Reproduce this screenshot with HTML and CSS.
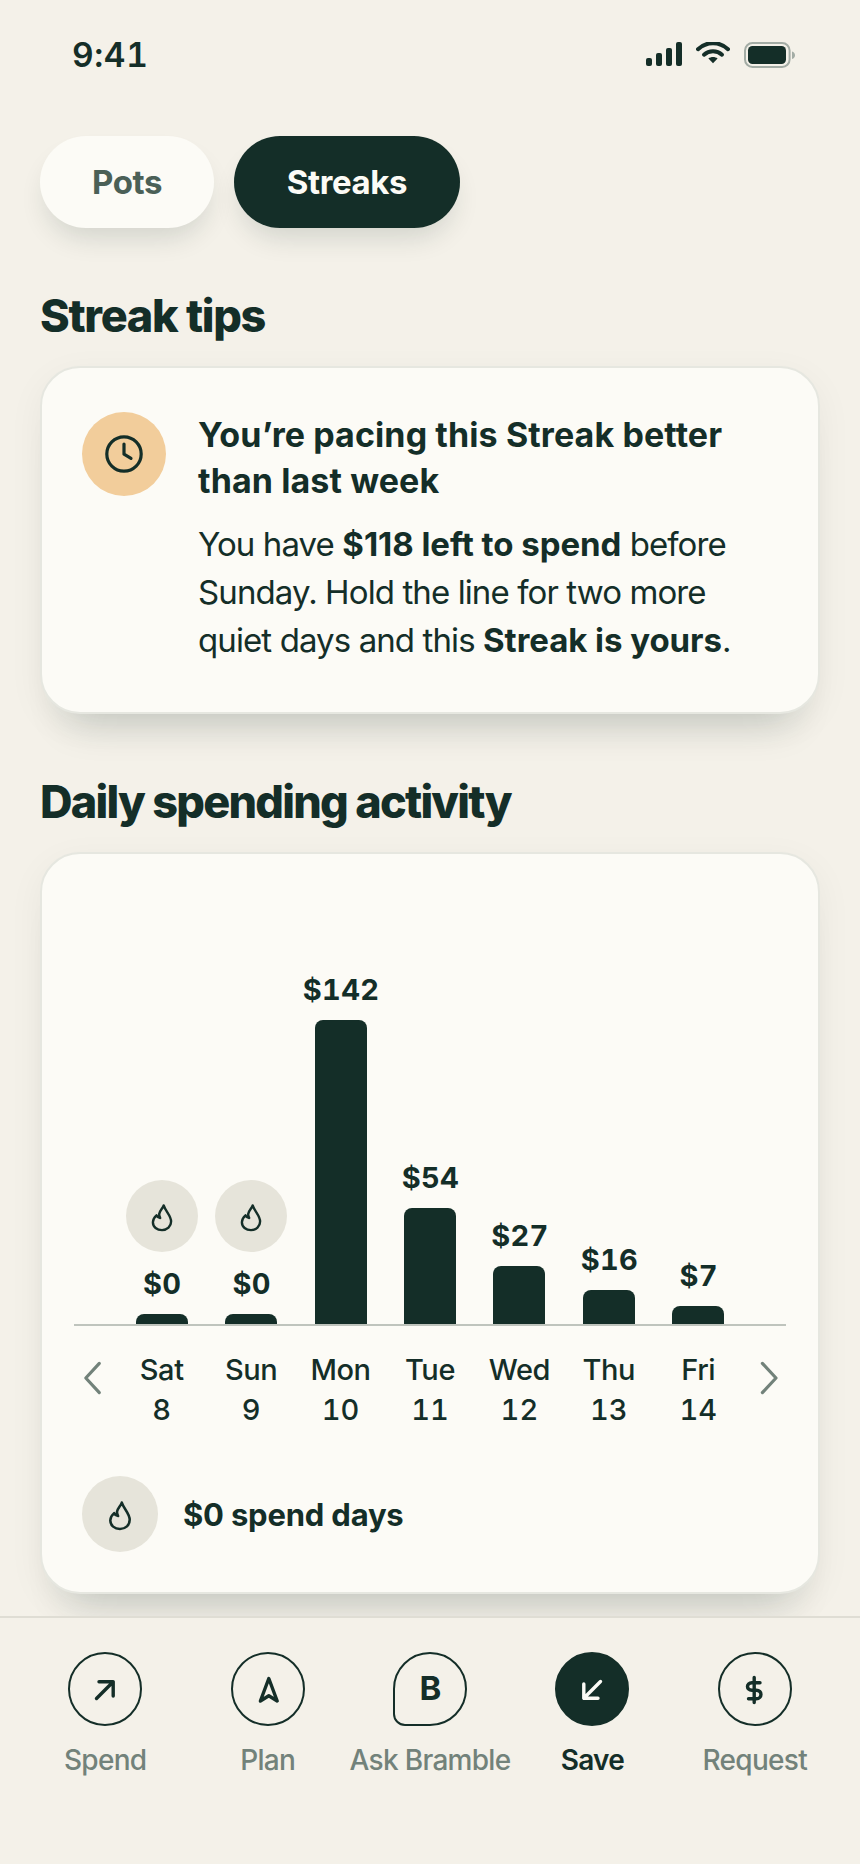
FILE: index.html
```html
<!DOCTYPE html>
<html lang="en">
<head>
  <meta charset="UTF-8">
  <meta name="viewport" content="width=device-width, initial-scale=1.0">
  <title>Bramble - Streaks</title>
  <link rel="stylesheet" href="styles.css">
</head>
<body>
  <!-- shared flame icon -->
  <svg class="defs" width="0" height="0">
    <symbol id="flame" viewBox="0 0 24 30">
      <path d="M13.7 2.4C12.6 5.8 9.6 7.6 9.2 11C9.1 12.6 9.5 13.6 10.2 15C8.6 14.8 7.2 13.8 6.5 12.3C4.3 14.2 2.9 16.6 2.9 19.3C2.9 24 7 27.1 12 27.1C17.2 27.1 21.1 23.6 21.1 18.6C21.1 12.4 15.6 8.6 13.7 2.4Z"/>
    </symbol>
  </svg>

  <div class="status-bar">
    <span class="time">9:41</span>
    <div class="status-icons">
      <svg class="signal" width="36" height="24" viewBox="0 0 36 24">
        <rect x="0" y="16" width="6" height="8" rx="2"/>
        <rect x="10" y="11" width="6" height="13" rx="2"/>
        <rect x="20" y="6" width="6" height="18" rx="2"/>
        <rect x="30" y="0" width="6" height="24" rx="2"/>
      </svg>
      <svg class="wifi" width="34" height="24" viewBox="0 0 34 24">
        <path d="M2 7.2C10.5 -0.9 23.5 -0.9 32 7.2"/>
        <path d="M8 12.7C13 8 21 8 26 12.7"/>
        <path class="dot" d="M12.4 16.4C15 14.4 19 14.4 21.6 16.4L17 21.2Z"/>
      </svg>
      <svg class="battery" width="52" height="26" viewBox="0 0 52 26">
        <rect class="shell" x="1" y="1" width="44.6" height="24" rx="7.5"/>
        <rect x="4" y="4" width="38" height="18" rx="4.5"/>
        <path class="nub" d="M48 9.5C50 10 51 11.5 51 13.2C51 15 50 16.4 48 17Z"/>
      </svg>
    </div>
  </div>

  <main class="content">
    <div class="tabs">
      <button class="tab">Pots</button>
      <button class="tab active">Streaks</button>
    </div>

    <h2 class="section-title">Streak tips</h2>
    <section class="card tip-card">
      <div class="tip-icon">
        <svg width="40" height="40" viewBox="0 0 40 40">
          <circle cx="20" cy="20" r="17.2"/>
          <path d="M20 10V20.2L27 24.4"/>
        </svg>
      </div>
      <div class="tip-text">
        <h3>You’re pacing this Streak better<br>than last week</h3>
        <p>You have <b>$118 left to spend</b> before<br>Sunday. Hold the line for two more<br>quiet days and this <b>Streak is yours</b>.</p>
      </div>
    </section>

    <h2 class="section-title second">Daily spending activity</h2>
    <section class="card chart-card">
      <div class="chart">
        <div class="col">
          <div class="flame"><svg width="24" height="30"><use href="#flame"/></svg></div>
          <span class="amount">$0</span>
          <div class="bar" style="height: 10px"></div>
        </div>
        <div class="col">
          <div class="flame"><svg width="24" height="30"><use href="#flame"/></svg></div>
          <span class="amount">$0</span>
          <div class="bar" style="height: 10px"></div>
        </div>
        <div class="col">
          <span class="amount">$142</span>
          <div class="bar" style="height: 304px"></div>
        </div>
        <div class="col">
          <span class="amount">$54</span>
          <div class="bar" style="height: 116px"></div>
        </div>
        <div class="col">
          <span class="amount">$27</span>
          <div class="bar" style="height: 58px"></div>
        </div>
        <div class="col">
          <span class="amount">$16</span>
          <div class="bar" style="height: 34px"></div>
        </div>
        <div class="col">
          <span class="amount">$7</span>
          <div class="bar" style="height: 18px"></div>
        </div>
      </div>

      <div class="days">
        <svg class="arrow" width="20" height="36" viewBox="0 0 20 36"><path d="M19.3 3.4L5.8 18L19.3 32.6"/></svg>
        <div class="day-list">
          <div class="day">Sat<span>8</span></div>
          <div class="day">Sun<span>9</span></div>
          <div class="day">Mon<span>10</span></div>
          <div class="day">Tue<span>11</span></div>
          <div class="day">Wed<span>12</span></div>
          <div class="day">Thu<span>13</span></div>
          <div class="day">Fri<span>14</span></div>
        </div>
        <svg class="arrow" width="20" height="36" viewBox="0 0 20 36"><path d="M2.4 3.4L16 18L2.4 32.6"/></svg>
      </div>

      <div class="legend">
        <div class="flame big"><svg width="26" height="32"><use href="#flame"/></svg></div>
        <span>$0 spend days</span>
      </div>
    </section>
  </main>

  <nav class="bottom-nav">
    <a class="nav-item">
      <span class="nav-icon"><svg width="32" height="32" viewBox="0 0 32 32"><path d="M7.5 25.5L24.2 8.8M10 8.8H24.2V23"/></svg></span>
      Spend
    </a>
    <a class="nav-item">
      <span class="nav-icon"><svg width="32" height="32" viewBox="0 0 32 32"><path d="M16.8 5.5L25.2 28L16.8 22.8L8.4 28Z"/></svg></span>
      Plan
    </a>
    <a class="nav-item">
      <span class="nav-icon bubble">B</span>
      Ask Bramble
    </a>
    <a class="nav-item active">
      <span class="nav-icon"><svg width="32" height="32" viewBox="0 0 32 32"><path d="M24.5 8.5L7.8 25.2M7.8 11V25.2H22"/></svg></span>
      Save
    </a>
    <a class="nav-item">
      <span class="nav-icon"><svg width="32" height="32" viewBox="0 0 32 32"><path d="M15.2 4.5V29.5M21 9.8H12.9C7 9.8 7 17.2 12.9 17.2H17.3C23.5 17.2 23.5 25.7 17.3 25.7H9.5"/></svg></span>
      Request
    </a>
  </nav>
</body>
</html>
```

FILE: styles.css
```css
* {
  box-sizing: border-box;
}
body {
  margin: 0;
  width: 860px;
  height: 1864px;
  overflow: hidden;
  display: flex;
  flex-direction: column;
  background: #f4f1e9;
  color: #142e28;
  font-family: Inter, "Liberation Sans", sans-serif;
}
h2, h3, p {
  margin: 0;
}
svg {
  display: block;
  fill: none;
  stroke: #142e28;
  stroke-linecap: round;
  stroke-linejoin: round;
}
.defs {
  position: absolute;
}

/* status bar */
.status-bar {
  height: 108px;
  flex: none;
  display: flex;
  justify-content: space-between;
  padding: 0 64px 0 72px;
}
.time {
  font-size: 33.5px;
  font-weight: 600;
  line-height: 40px;
  margin-top: 35px;
  letter-spacing: 0.6px;
  font-variant-numeric: tabular-nums;
}
.status-icons {
  display: flex;
  margin-top: 42px;
  gap: 14px;
}
.signal {
  fill: #142e28;
  stroke: none;
}
.wifi {
  stroke-width: 4;
}
.wifi .dot {
  fill: #142e28;
  stroke: none;
}
.battery {
  fill: #142e28;
  stroke: none;
}
.battery .shell {
  fill: none;
  stroke: #a3aca5;
  stroke-width: 2;
}
.battery .nub {
  fill: #a3aca5;
}

/* tabs */
.content {
  flex: none;
  height: 1508px;
  overflow: hidden;
  padding: 28px 40px 0;
}
.tabs {
  display: flex;
  gap: 20px;
}
.tab {
  width: 174px;
  height: 92px;
  padding: 0;
  border: none;
  border-radius: 46px;
  background: #fcfbf6;
  color: #4b6057;
  font-family: inherit;
  font-size: 33px;
  font-weight: 700;
  letter-spacing: -0.4px;
  box-shadow: 0 16px 28px -8px rgba(20, 46, 40, 0.16);
}
.tab.active {
  width: 226px;
  background: #142e28;
  color: #fcfbf6;
}

.section-title {
  margin-top: 62px;
  font-size: 45px;
  font-weight: 800;
  line-height: 52px;
  letter-spacing: -1.3px;
}
.section-title.second {
  letter-spacing: -1.75px;
}
.card {
  margin-top: 24px;
  background: #fcfbf6;
  border: 2px solid #e6e7e0;
  border-radius: 40px;
  box-shadow: 0 36px 40px -28px rgba(20, 46, 40, 0.2), 0 10px 36px rgba(20, 46, 40, 0.05);
}

/* tip */
.tip-card {
  height: 348px;
  display: flex;
  gap: 32px;
  padding: 44px 40px 0;
}
.tip-icon {
  width: 84px;
  height: 84px;
  flex: none;
  border-radius: 50%;
  background: #f2cd9b;
  display: flex;
  align-items: center;
  justify-content: center;
}
.tip-icon svg {
  stroke-width: 3.2;
}
.tip-text {
  white-space: nowrap;
}
.tip-text h3 {
  font-size: 34px;
  font-weight: 700;
  line-height: 46px;
  letter-spacing: 0.1px;
}
.tip-text p {
  margin-top: 16px;
  font-size: 33px;
  line-height: 48px;
  letter-spacing: -0.9px;
}
.tip-text b {
  font-weight: 700;
  letter-spacing: -0.05px;
}

/* chart */
.chart-card {
  height: 742px;
  padding: 0 32px;
}
.chart {
  height: 472px;
  padding: 0 43px;
  display: flex;
  align-items: flex-end;
  border-bottom: 2px solid #bfc4bd;
}
.col {
  flex: 1;
  display: flex;
  flex-direction: column;
  align-items: center;
}
.bar {
  width: 52px;
  background: #142e28;
  border-radius: 8px 8px 0 0;
}
.amount {
  font-size: 29px;
  font-weight: 700;
  line-height: 36px;
  margin-bottom: 12px;
  padding-left: 1px;
  letter-spacing: 0.3px;
  font-variant-numeric: tabular-nums;
}
.flame {
  width: 72px;
  height: 72px;
  margin-bottom: 14px;
  border-radius: 50%;
  background: #e6e4da;
  display: flex;
  align-items: center;
  justify-content: center;
}
.flame svg {
  stroke-width: 2.4;
  margin-top: 4px;
}
.days {
  display: flex;
  padding: 24px 6px 0;
}
.arrow {
  margin-top: 10px;
  overflow: visible;
  stroke: #72827a;
  stroke-width: 3.2;
}
.day-list {
  flex: 1;
  display: flex;
  padding: 0 17px;
}
.day {
  flex: 1;
  font-size: 29px;
  font-weight: 500;
  line-height: 40px;
  text-align: center;
  letter-spacing: -0.4px;
}
.day span {
  display: block;
  letter-spacing: 0;
  font-variant-numeric: tabular-nums;
}
.legend {
  margin: 46px 0 0 8px;
  display: flex;
  align-items: center;
  gap: 25px;
  font-size: 31px;
  font-weight: 700;
  letter-spacing: -0.2px;
}
.flame.big {
  width: 76px;
  height: 76px;
  margin-bottom: 0;
}

/* bottom nav */
.bottom-nav {
  flex: 1;
  display: flex;
  padding: 34px 24px 0;
  border-top: 2px solid #dfddd4;
  background: #f4f1e9;
}
.nav-item {
  flex: 1;
  display: flex;
  flex-direction: column;
  align-items: center;
  gap: 16px;
  font-size: 28px;
  font-weight: 500;
  line-height: 36px;
  letter-spacing: -0.7px;
  color: #72827a;
  white-space: nowrap;
}
.nav-icon {
  width: 74px;
  height: 74px;
  border: 2px solid #142e28;
  border-radius: 50%;
  display: flex;
  align-items: center;
  justify-content: center;
}
.nav-icon svg {
  stroke-width: 3.4;
}
.bubble {
  padding-bottom: 2px;
  border-bottom-left-radius: 12px;
  color: #142e28;
  font-size: 33px;
  font-weight: 700;
}
.nav-item.active {
  color: #142e28;
  font-weight: 600;
}
.nav-item.active .nav-icon {
  background: #142e28;
}
.nav-item.active svg {
  stroke: #fcfbf6;
}
```
